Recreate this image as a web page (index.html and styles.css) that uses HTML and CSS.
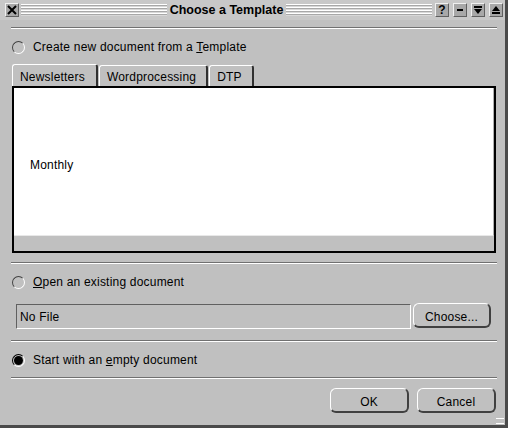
FILE: index.html
```html
<!DOCTYPE html>
<html>
<head>
<meta charset="utf-8">
<link rel="stylesheet" href="styles.css">
</head>
<body>
<div class="window">
  <div class="titlebar">
    <div class="tbtn close">
      <svg width="10" height="10" viewBox="0 0 10 10"><path d="M1 1L9 9M9 1L1 9" stroke="#000" stroke-width="2"/></svg>
    </div>
    <div class="stripes"></div>
    <div class="title">Choose a Template</div>
    <div class="stripes"></div>
    <div class="tbtns">
      <div class="tbtn"><span class="q">?</span></div>
      <div class="tbtn"><svg width="10" height="10" viewBox="0 0 10 10"><rect x="2" y="4" width="6" height="2" fill="#000"/></svg></div>
      <div class="tbtn"><svg width="10" height="10" viewBox="0 0 10 10"><rect x="1" y="1" width="8" height="2" fill="#000"/><path d="M1 4H9L5 9Z" fill="#000"/></svg></div>
      <div class="tbtn"><svg width="10" height="10" viewBox="0 0 10 10"><path d="M5 1L9 6H1Z" fill="#000"/><rect x="1" y="7" width="8" height="2" fill="#000"/></svg></div>
    </div>
  </div>

  <div class="body">
    <div class="sep sep1"></div>
    <label class="radio-row r1"><span class="radio"></span><span>Create new document from a <u>T</u>emplate</span></label>

    <div class="tabs">
      <div class="tab active">Newsletters</div>
      <div class="tab">Wordprocessing</div>
      <div class="tab">DTP</div>
    </div>
    <div class="panel">
      <div class="list">
        <div class="item">Monthly</div>
      </div>
      <div class="strip"></div>
    </div>

    <div class="sep sep2"></div>
    <label class="radio-row r2"><span class="radio"></span><span><u>O</u>pen an existing document</span></label>
    <div class="file-row">
      <div class="field">No File</div>
      <div class="btn choose">Choose...</div>
    </div>
    <div class="sep sep3"></div>
    <label class="radio-row r3"><span class="radio checked"></span><span>Start with an <u>e</u>mpty document</span></label>
    <div class="sep sep4"></div>
    <div class="buttons">
      <div class="btn ok">OK</div>
      <div class="btn cancel">Cancel</div>
    </div>
  </div>
  <div class="grip"></div>
</div>
</body>
</html>
```

FILE: styles.css
```css
html, body {
  margin: 0;
  padding: 0;
  background: #c0c0c0;
}
.window {
  position: relative;
  width: 508px;
  height: 428px;
  box-sizing: border-box;
  background: #c0c0c0;
  border-right: 3px solid #4a4a4a;
  border-bottom: 3px solid #4a4a4a;
  font-family: "Liberation Sans", Arial, sans-serif;
  font-size: 12px;
  letter-spacing: 0.2px;
  color: #000;
  overflow: hidden;
}
.titlebar {
  height: 20px;
  display: flex;
  align-items: center;
  padding: 0 2px 0 5px;
  background: #c8c8c8;
}
.stripes {
  flex: 1;
  height: 12px;
  background: repeating-linear-gradient(to bottom, #ffffff 0, #ffffff 1px, #a8a8a8 1px, #a8a8a8 2px, #d8d8d8 2px, #d8d8d8 3px);
}
.title {
  font-weight: bold;
  font-size: 12.5px;
  letter-spacing: 0;
  padding: 0 3px;
  color: #000;
}
.tbtns {
  display: flex;
  gap: 4px;
  margin-left: 3px;
}
.tbtn {
  width: 14px;
  height: 14px;
  box-sizing: border-box;
  border-top: 1px solid #f0f0f0;
  border-left: 1px solid #f0f0f0;
  border-right: 1px solid #606060;
  border-bottom: 1px solid #606060;
  background: #a8a8a8;
  display: flex;
  align-items: center;
  justify-content: center;
}
.tbtn.close {
  margin-right: 2px;
}
.q {
  font-weight: bold;
  font-size: 12px;
  line-height: 12px;
  letter-spacing: 0;
}
.body {
  padding: 0 8px 0 11px;
  display: flex;
  flex-direction: column;
}
.sep {
  border-top: 1px solid #707070;
  border-bottom: 1px solid #ffffff;
  height: 0;
}
.sep1 { margin-top: 7px; }
.radio-row {
  display: flex;
  align-items: center;
  height: 20px;
  gap: 8px;
  padding-left: 1px;
}
.r1 { margin-top: 8px; }
.radio {
  width: 13px;
  height: 13px;
  box-sizing: border-box;
  border-radius: 50%;
  border: 1px solid;
  border-color: #404040 #ffffff #ffffff #404040;
  background: #c0c0c0;
  position: relative;
}
.radio.checked {
  border-color: #000 #fff #fff #000;
}
.radio.checked::after {
  content: "";
  position: absolute;
  left: 1px;
  top: 1px;
  width: 9px;
  height: 9px;
  border-radius: 50%;
  background: #000;
}
.tabs {
  display: flex;
  margin-top: 7px;
  padding-left: 1px;
  height: 22px;
}
.tab {
  height: 22px;
  box-sizing: border-box;
  padding: 4px 10px 0 7px;
  border-top: 1px solid #ffffff;
  border-left: 1px solid #ffffff;
  border-right: 2px solid #303030;
  border-top-left-radius: 3px;
  border-top-right-radius: 3px;
  margin-right: 1px;
  margin-top: 1px;
}
.tab.active {
  margin-top: 0;
  height: 23px;
  padding-top: 5px;
  padding-right: 11px;
}
.panel {
  height: 167px;
  box-sizing: border-box;
  margin-left: 1px;
  margin-right: 1px;
  border: 2px solid #000;
  display: flex;
  flex-direction: column;
}
.list {
  flex: 1;
  background: #ffffff;
  border-bottom: 1px solid #e8e8e8;
  border-right: 1px solid #b0b0b0;
  display: flex;
  align-items: center;
  padding-left: 16px;
  padding-top: 7px;
}
.strip {
  height: 15px;
  background: #c0c0c0;
}
.sep2 { margin-top: 9px; }
.r2 { margin-top: 8px; }
.file-row {
  display: flex;
  margin-top: 11px;
  padding-left: 5px;
  padding-right: 6px;
  gap: 2px;
}
.field {
  flex: 1;
  height: 25px;
  box-sizing: border-box;
  border-top: 1px solid #606060;
  border-left: 1px solid #606060;
  border-bottom: 1px solid #ffffff;
  border-right: 1px solid #ffffff;
  display: flex;
  align-items: center;
  padding-left: 3px;
  margin-top: 1px;
}
.btn {
  height: 25px;
  box-sizing: border-box;
  border-radius: 6px;
  border-top: 1px solid #ffffff;
  border-left: 1px solid #ffffff;
  border-right: 2px solid #404040;
  border-bottom: 2px solid #404040;
  display: flex;
  align-items: center;
  justify-content: center;
  padding-top: 3px;
}
.choose { width: 78px; }
.sep3 { margin-top: 11px; }
.r3 { margin-top: 8px; }
.sep4 { margin-top: 7px; }
.buttons {
  display: flex;
  justify-content: flex-end;
  gap: 8px;
  margin-top: 9px;
  margin-right: 1px;
}
.ok, .cancel { width: 79px; }
.grip {
  position: absolute;
  right: 1px;
  bottom: 1px;
  width: 8px;
  height: 4px;
  border-top: 1px solid #fff;
  border-bottom: 1px solid #fff;
}
```
